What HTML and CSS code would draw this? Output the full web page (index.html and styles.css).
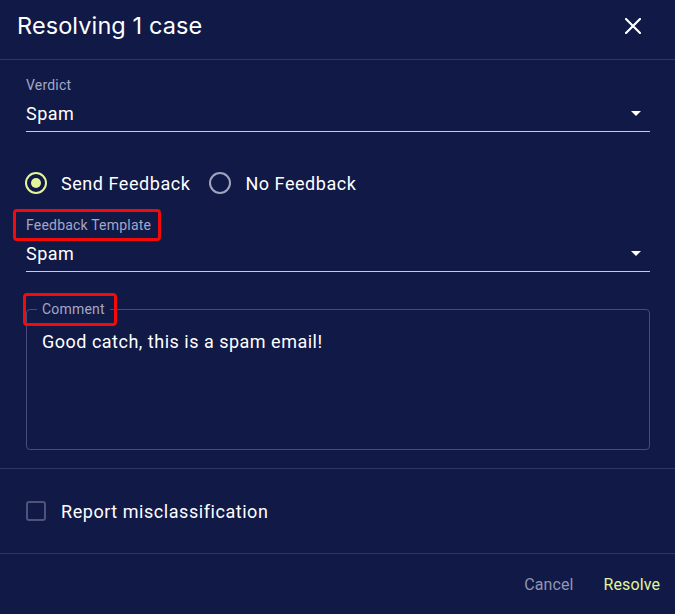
FILE: index.html
```html
<!DOCTYPE html>
<html>
<head>
<meta charset="utf-8">
<link rel="stylesheet" href="styles.css">
</head>
<body>
<div class="dialog">
  <div class="header">
    <h1 class="title">Resolving 1 case</h1>
    <button class="close" aria-label="Close">
      <svg width="16" height="16" viewBox="0 0 16 16"><path d="M1 1 L15 15 M15 1 L1 15" stroke="#fff" stroke-width="2.2" stroke-linecap="square"/></svg>
    </button>
  </div>
  <div class="content">
    <div class="field">
      <div class="label">Verdict</div>
      <div class="select"><span>Spam</span><span class="arrow"></span></div>
    </div>
    <div class="radios">
      <label class="radio"><span class="ring on"><span class="dot"></span></span>Send Feedback</label>
      <label class="radio"><span class="ring"></span>No Feedback</label>
    </div>
    <div class="field">
      <div class="label"><span class="mark mark-tpl">Feedback Template</span></div>
      <div class="select"><span>Spam</span><span class="arrow"></span></div>
    </div>
    <fieldset class="comment">
      <legend><span class="mark mark-cmt">Comment</span></legend>
      <div class="comment-text">Good catch, this is a spam email!</div>
    </fieldset>
  </div>
  <div class="check-row">
    <span class="checkbox"></span>
    <span class="check-label">Report misclassification</span>
  </div>
  <div class="footer">
    <button class="btn cancel">Cancel</button>
    <button class="btn resolve">Resolve</button>
  </div>
</div>
</body>
</html>
```

FILE: styles.css
```css
* { box-sizing: border-box; }
html, body { margin: 0; padding: 0; background: #111947; }
body { font-family: Roboto, "Liberation Sans", sans-serif; color: #fff; }
.dialog { width: 675px; height: 614px; background: #111947; display: flex; flex-direction: column; }
.header { height: 60px; border-bottom: 1px solid #2e3666; display: flex; align-items: center; justify-content: space-between; padding: 0 34px 0 17px; }
.title { margin: 0; font-family: Inter, "Noto Sans", sans-serif; font-weight: 400; font-size: 23.5px; letter-spacing: 0.1px; color: #fff; position: relative; top: -4px; }
.close { background: none; border: 0; padding: 0; width: 16px; height: 16px; display: flex; cursor: pointer; position: relative; top: -4px; }
.content { padding: 17px 25px 0 26px; }
.field { display: flex; flex-direction: column; }
.label { font-size: 14px; line-height: 17px; letter-spacing: 0.2px; color: #a3a8c3; }
.select { height: 38px; border-bottom: 1px solid #c9ccd9; display: flex; align-items: center; justify-content: space-between; font-size: 18px; letter-spacing: 0.5px; padding: 1px 9px 0 0; }
.arrow { width: 0; height: 0; border-left: 5px solid transparent; border-right: 5px solid transparent; border-top: 5px solid #fff; }
.radios { display: flex; align-items: center; height: 40px; margin-top: 31px; margin-bottom: 14px; margin-left: -1px; }
.radio { display: flex; align-items: center; font-size: 18px; margin-right: 19px; letter-spacing: 0.55px; }
.ring { width: 22px; height: 22px; border-radius: 50%; border: 2px solid #a0a5bf; margin-right: 14px; display: flex; align-items: center; justify-content: center; }
.ring.on { border-color: #e2f59c; }
.dot { width: 10px; height: 10px; border-radius: 50%; background: #e2f59c; }
.mark { position: relative; }
.mark::after { content: ""; position: absolute; border: 3px solid #f50a0a; border-radius: 4px; }
.mark-tpl::after { left: -13px; right: -10px; top: -8px; bottom: -8px; }
.mark-cmt::after { left: -19px; right: -12px; top: -8px; bottom: -9px; }
.comment { margin: 29px 0 0 0; padding: 13px 16px 0 15px; height: 149px; border: 1px solid #454d7c; border-radius: 4px; min-width: 0; }
.comment legend { padding: 0 5px; margin-left: -5px; font-size: 14px; line-height: 17px; letter-spacing: 0.2px; color: #a3a8c3; }
.comment-text { font-size: 18px; line-height: 21px; letter-spacing: 0.5px; color: #fff; }
.check-row { margin-top: 18px; border-top: 1px solid #2e3666; border-bottom: 1px solid #2e3666; height: 86px; display: flex; align-items: center; padding-left: 26px; }
.checkbox { width: 20px; height: 20px; border: 2px solid #4d547a; border-radius: 3px; margin-right: 15px; }
.check-label { font-size: 18px; letter-spacing: 0.55px; }
.footer { flex: 1; display: flex; justify-content: flex-end; align-items: center; padding-right: 15px; }
.btn { background: none; border: 0; font-family: Roboto, "Liberation Sans", sans-serif; font-size: 16px; letter-spacing: 0.1px; padding: 0; margin-left: 30px; cursor: pointer; }
.cancel { color: #9096b5; }
.resolve { color: #e3f59c; }
```
